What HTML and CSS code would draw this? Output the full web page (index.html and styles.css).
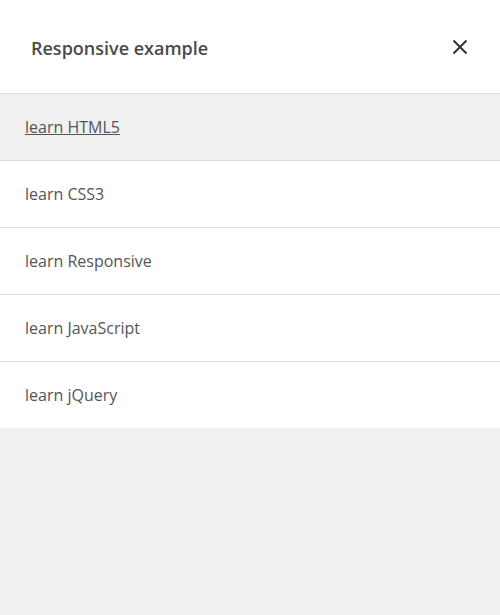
FILE: index.html
```html
<!DOCTYPE html>
<html>
<head>
<meta charset="utf-8">
<link rel="stylesheet" href="styles.css">
</head>
<body>
<div class="panel">
  <div class="header">
    <h1 class="title">Responsive example</h1>
    <button class="close" aria-label="close">
      <svg width="16" height="16" viewBox="0 0 16 16"><path d="M1.5 1.5 L14.5 14.5 M14.5 1.5 L1.5 14.5" stroke="#333" stroke-width="2" fill="none"/></svg>
    </button>
  </div>
  <ul class="menu">
    <li class="item active"><a href="#">learn HTML5</a></li>
    <li class="item"><a href="#">learn CSS3</a></li>
    <li class="item"><a href="#">learn Responsive</a></li>
    <li class="item"><a href="#">learn JavaScript</a></li>
    <li class="item"><a href="#">learn jQuery</a></li>
  </ul>
</div>
</body>
</html>
```
FILE: styles.css
```css
html, body {
  margin: 0;
  padding: 0;
  background: #f0f0f0;
  font-family: "Open Sans", "Noto Sans", sans-serif;
}
.panel {
  background: #fff;
  box-shadow: 0 2px 5px rgba(0,0,0,0.1);
}
.header {
  height: 93px;
  display: flex;
  align-items: center;
  justify-content: space-between;
  padding: 2px 32px 0 31px;
  box-sizing: border-box;
}
.title {
  margin: 0;
  font-size: 18px;
  font-weight: 600;
  color: #4a4a4a;
}
.close {
  border: 0;
  background: none;
  padding: 0;
  width: 16px;
  height: 16px;
  display: flex;
  margin-bottom: 2px;
}
.menu {
  list-style: none;
  margin: 0;
  padding: 0;
}
.item {
  height: 66px;
  border-top: 1px solid #dcdcdc;
  display: flex;
  align-items: center;
  padding-left: 25px;
  font-size: 16px;
}
.item a {
  color: #555;
  text-decoration: none;
}
.item.active {
  background: #f0f0f0;
}
.item.active a {
  text-decoration: underline;
}
```
